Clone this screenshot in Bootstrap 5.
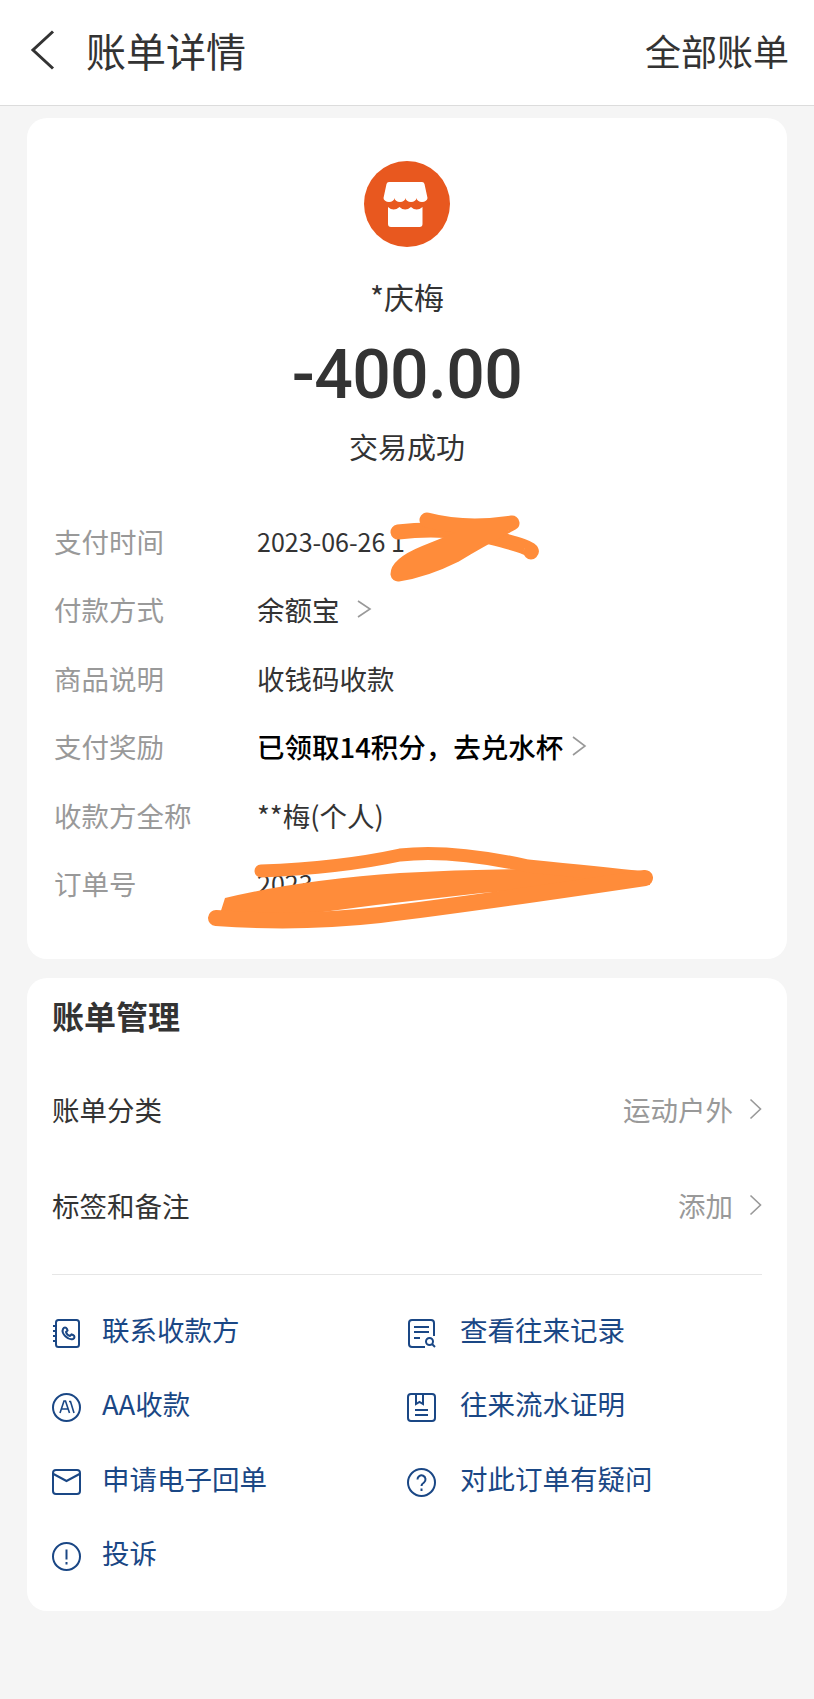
<!DOCTYPE html>
<html lang="zh-CN">

<head>
  <meta charset="UTF-8">
  <meta name="viewport" content="width=device-width, initial-scale=1.0">
  <title>账单详情</title>
  <link href="https://cdn.jsdelivr.net/npm/bootstrap@5.3.0/dist/css/bootstrap.min.css" rel="stylesheet">
  <style>
    body {
      background: #f5f5f5;
      color: #333;
      font-family: "Noto Sans CJK SC", "Liberation Sans", sans-serif;
      font-size: 27.5px;
      line-height: 40px;
      min-height: 1699px;
    }

    .top-bar {
      height: 106px;
      padding: 0 25px 5px 30px;
      background: #fff;
      border-bottom: 1px solid #dcdcdc;
    }

    .top-title {
      font-size: 40px;
      margin-left: 30px;
      line-height: 50px;
    }

    .top-link {
      font-size: 36px;
      line-height: 50px;
    }

    .bill-card {
      margin: 12px 27px 0;
      border-radius: 20px;
      overflow: hidden;
    }

    .shop-icon {
      width: 86px;
      height: 86px;
      margin-top: 43px;
    }

    .shop-name {
      margin-top: 29px;
      font-size: 30px;
    }

    .amount {
      margin-top: 19px;
      font-family: Roboto, "Liberation Sans", sans-serif;
      font-weight: 500;
      font-size: 68px;
      line-height: 80px;
      letter-spacing: -.7px;
    }

    .pay-state {
      margin-top: 11px;
      font-size: 29px;
    }

    .info-list {
      margin-top: 40.500px;
      padding: 0 27px 41.500px;
    }

    .info-row {
      height: 68.5px;
    }

    .info-label {
      width: 203px;
      flex: none;
      color: #999;
    }

    .info-date {
      font-size: 25px;
    }

    .info-reward {
      color: #000;
      font-weight: 500;
    }

    .scribble {
      position: absolute;
      left: 0;
      top: 0;
      width: 760px;
      height: 841px;
      pointer-events: none;
    }

    .manage-card {
      margin-top: 19px;
      padding: 15px 25px 22px;
    }

    .manage-title {
      font-size: 32px;
      font-weight: 700;
      line-height: 44px;
      margin-bottom: 24px;
    }

    .manage-row {
      height: 96px;
    }

    .manage-value {
      color: #999;
    }

    .manage-line {
      margin: 21px 0 17px;
      border-top: 1px solid #e6e6e6;
    }

    .act-item {
      height: 74.3px;
      color: #1a4785;
    }

    .act-icon {
      width: 50px;
      flex: none;
    }

    .act-right .act-icon {
      width: 53px;
    }
  </style>
</head>

<body>
  <div class="top-bar d-flex align-items-center">
    <svg width="26" height="40" viewBox="0 0 26 40" fill="none" stroke="#333" stroke-width="3">
      <path d="M23 1.5 3 20l20 18.5" />
    </svg>
    <span class="top-title">账单详情</span>
    <span class="top-link ms-auto">全部账单</span>
  </div>

  <div class="card border-0 bill-card position-relative">
    <div class="d-flex flex-column align-items-center">
      <svg class="shop-icon" viewBox="0 0 86 86">
        <circle cx="43" cy="43" r="43" fill="#e8581f" />
        <path fill="#fff"
          d="M27 21H58q2 0 2.500 2L63.500 37a5.500 4 0 0 1-11 0 5.500 4 0 0 1-11 0 5.500 4 0 0 1-11 0 5.500 4 0 0 1-11 0L22.500 23q.5-2 2.500-2z" />
        <path fill="#fff" d="M24 46q5.500 5 11.500 0 5.500 5 11.500 0 5.500 5 11.500 0V63a3 3 0 0 1-3 3H27a3 3 0 0 1-3-3z" />
      </svg>
      <div class="shop-name">*庆梅</div>
      <div class="amount">-400.00</div>
      <div class="pay-state">交易成功</div>
    </div>

    <div class="info-list">
      <div class="info-row d-flex align-items-center">
        <div class="info-label">支付时间</div>
        <div class="info-date">2023-06-26 1</div>
      </div>
      <div class="info-row d-flex align-items-center">
        <div class="info-label">付款方式</div>
        <div>余额宝</div>
        <svg class="ms-3" width="16" height="20" viewBox="0 0 16 20" fill="none" stroke="#999" stroke-width="1.6">
          <path d="M2 2l12 8-12 8" />
        </svg>
      </div>
      <div class="info-row d-flex align-items-center">
        <div class="info-label">商品说明</div>
        <div>收钱码收款</div>
      </div>
      <div class="info-row d-flex align-items-center">
        <div class="info-label">支付奖励</div>
        <div class="info-reward">已领取14积分，去兑水杯</div>
        <svg class="ms-2" width="16" height="22" viewBox="0 0 16 22" fill="none" stroke="#999" stroke-width="1.6">
          <path d="M2 2l12 9-12 9" />
        </svg>
      </div>
      <div class="info-row d-flex align-items-center">
        <div class="info-label">收款方全称</div>
        <div>**梅(个人)</div>
      </div>
      <div class="info-row d-flex align-items-center">
        <div class="info-label">订单号</div>
        <div class="info-date">2023</div>
      </div>
    </div>

    <!-- the orange marker scribbles over the private data, in page coordinates -->
    <svg class="scribble" viewBox="27 118 760 841" fill="none" stroke="#ff8c3a" stroke-linecap="round"
      stroke-linejoin="round">
      <path stroke-width="15" d="M398 532Q445 526 490 537T531 552" />
      <path stroke-width="15" d="M427 520Q465 530 512 523Q480 540 455 555Q425 570 398 574Q398 564 425 553T470 535" />
      <path fill="#ff8c3a" stroke="none"
        d="M225 898Q300 880 400 873Q520 866 648 871L650 885Q560 888 482 893L376 905 300 915 218 920Z" />
      <path stroke-width="13" d="M261 871Q340 868 400 855Q450 849 528 866Q600 873 645 878" />
      <path stroke-width="16" d="M216 918Q300 924 380 915Q470 904 645 878" />
    </svg>
  </div>

  <div class="card border-0 bill-card manage-card">
    <div class="manage-title">账单管理</div>
    <div class="manage-row d-flex align-items-center">
      <div>账单分类</div>
      <div class="manage-value ms-auto">运动户外</div>
      <svg class="ms-3" width="13" height="22" viewBox="0 0 13 22" fill="none" stroke="#999" stroke-width="1.6">
        <path d="M1.500 1.500 11.500 11l-10 9.500" />
      </svg>
    </div>
    <div class="manage-row d-flex align-items-center">
      <div>标签和备注</div>
      <div class="manage-value ms-auto">添加</div>
      <svg class="ms-3" width="13" height="22" viewBox="0 0 13 22" fill="none" stroke="#999" stroke-width="1.6">
        <path d="M1.500 1.500 11.500 11l-10 9.500" />
      </svg>
    </div>
    <div class="manage-line"></div>

    <div class="row g-0">
      <div class="col-6 act-item d-flex align-items-center">
        <div class="act-icon">
          <svg width="29" height="29" viewBox="0 0 29 29" fill="none" stroke="#1a4785" stroke-width="2">
            <rect x="4" y="1" width="23" height="27" rx="2.500" />
            <path d="M1 7h3M1 12h3M1 17h3M1 22h3" />
            <path d="M11 10c1-2 3-2 4 0l.5 1.500-1.500 1.500c.5 2 2 3.500 4 4l1.500-1.500 1.500.5c2 1 2 3 0 4-5 1.500-12-5.500-10-10z" />
          </svg>
        </div>
        <span>联系收款方</span>
      </div>
      <div class="col-6 act-item act-right d-flex align-items-center">
        <div class="act-icon">
          <svg width="29" height="29" viewBox="0 0 29 29" fill="none" stroke="#1a4785" stroke-width="2">
            <path d="M27 17V4a3 3 0 0 0-3-3H5a3 3 0 0 0-3 3v21a3 3 0 0 0 3 3h13" />
            <path d="M7 8h15M7 13h15M7 19h6" />
            <circle cx="22.500" cy="22.500" r="3.500" />
            <path d="M25 25l3 3" />
          </svg>
        </div>
        <span>查看往来记录</span>
      </div>
      <div class="col-6 act-item d-flex align-items-center">
        <div class="act-icon">
          <svg width="29" height="29" viewBox="0 0 29 29" fill="none" stroke="#1a4785" stroke-width="2">
            <circle cx="14.500" cy="14.500" r="13.500" />
            <path d="M8 20l4-12h1.500l4 12M9.500 16h6.500M17 8.500h1.500l3.500 11.500" stroke-width="1.600" />
          </svg>
        </div>
        <span>AA收款</span>
      </div>
      <div class="col-6 act-item act-right d-flex align-items-center">
        <div class="act-icon">
          <svg width="29" height="29" viewBox="0 0 29 29" fill="none" stroke="#1a4785" stroke-width="2">
            <rect x="1" y="1" width="27" height="27" rx="3" />
            <path d="M9 1v10l3.500-2 3.500 2V1M8 17h13M8 22h13" />
          </svg>
        </div>
        <span>往来流水证明</span>
      </div>
      <div class="col-6 act-item d-flex align-items-center">
        <div class="act-icon">
          <svg width="29" height="26" viewBox="0 0 29 26" fill="none" stroke="#1a4785" stroke-width="2">
            <rect x="1" y="1" width="27" height="24" rx="3" />
            <path d="M1.500 5 14.500 12 27.500 5" />
          </svg>
        </div>
        <span>申请电子回单</span>
      </div>
      <div class="col-6 act-item act-right d-flex align-items-center">
        <div class="act-icon">
          <svg width="29" height="29" viewBox="0 0 29 29" fill="none" stroke="#1a4785" stroke-width="2">
            <circle cx="14.500" cy="14.500" r="13.500" />
            <path d="M10.500 11.500a4 4 0 1 1 6.500 3c-1.500 1-2.500 1.700-2.500 3.500" />
            <path d="M14.500 20.500v2.500" />
          </svg>
        </div>
        <span>对此订单有疑问</span>
      </div>
      <div class="col-6 act-item d-flex align-items-center">
        <div class="act-icon">
          <svg width="29" height="29" viewBox="0 0 29 29" fill="none" stroke="#1a4785" stroke-width="2">
            <circle cx="14.500" cy="14.500" r="13.500" />
            <path d="M14.500 7.500v10M14.500 20v2.500" />
          </svg>
        </div>
        <span>投诉</span>
      </div>
    </div>
  </div>

  <script src="https://cdn.jsdelivr.net/npm/bootstrap@5.3.0/dist/js/bootstrap.bundle.min.js"></script>
</body>

</html>
